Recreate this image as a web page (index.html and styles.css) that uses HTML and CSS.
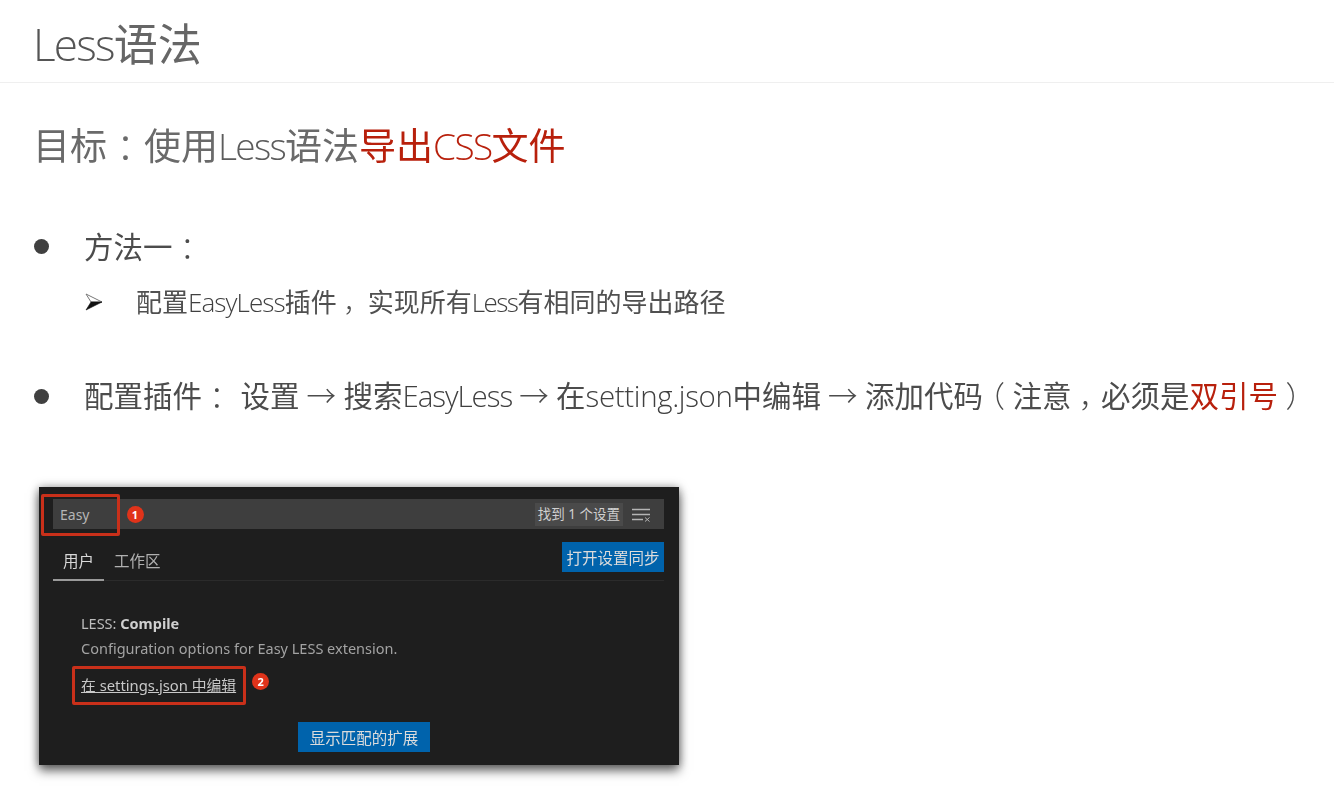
FILE: index.html
```html
<!DOCTYPE html>
<html lang="zh-CN">
<head>
<meta charset="utf-8">
<title>Less语法</title>
<link rel="stylesheet" href="styles.css">
</head>
<body>
<header class="title-bar"><h1 class="title"><span class="latin">Less</span>语法</h1></header>
<main class="content">
  <h2 class="goal">目标<span class="cell">：</span>使用<span class="latin">Less</span>语法<span class="red">导出<span class="latin">CSS</span>文件</span></h2>
  <ul class="points">
    <li class="point first">
      <span class="dot"></span>
      <span>方法一<span class="cell">：</span></span>
    </li>
    <li class="sub">
      <span class="arrow"><svg width="18" height="18" viewBox="0 0 18 18"><path d="M1 1 17 9 6 9Z" fill="#fff" stroke="#777" stroke-width="1"/><path d="M17 9 1 17 6 9Z" fill="#111" stroke="#111" stroke-width=".6"/></svg></span>
      <span>配置<span class="latin">EasyLess</span>插件<span class="cell">，</span><span class="gap-s"></span>实现所有<span class="latin tight">Less</span>有相同的导出路径</span>
    </li>
    <li class="point second">
      <span class="dot"></span>
      <span>配置插件<span class="cell">：</span><span class="gap"></span>设置<span class="thin"> → </span>搜索<span class="latin">EasyLess</span><span class="thin"> → </span>在<span class="latin loose">setting.json</span>中编辑<span class="thin"> → </span>添加代码<span class="cell">（</span>注意<span class="cell">，</span>必须是<span class="red">双引号</span><span class="cell">）</span></span>
    </li>
  </ul>
  <section class="shot">
    <div class="search">
      <span class="query">Easy</span>
      <span class="badge">1</span>
      <span class="count">找到 1 个设置</span>
      <svg class="clear" width="19" height="14" viewBox="0 0 19 14"><path d="M0 1.500H18M0 6.500H18M0 11.500H11" stroke="#b5b5b5" stroke-width="1.300"/><path d="M13 9.500 17.500 13.500M17.500 9.500 13 13.500" stroke="#b5b5b5"/></svg>
    </div>
    <div class="tabs">
      <span class="tab active">用户</span>
      <span class="tab">工作区</span>
      <span class="btn sync">打开设置同步</span>
    </div>
    <div class="setting">
      <p class="name">LESS: <b>Compile</b></p>
      <p class="desc">Configuration options for Easy LESS extension.</p>
      <p class="link-row"><a class="link">在 settings.json 中编辑</a><span class="badge">2</span></p>
    </div>
    <div class="foot"><span class="btn show">显示匹配的扩展</span></div>
    <span class="mark mark-a"></span>
    <span class="mark mark-b"></span>
  </section>
</main>
</body>
</html>
```
FILE: styles.css
```css
* { box-sizing: border-box; }
html, body { margin: 0; height: 100%; }
body {
  background: #fff;
  color: #595959;
  font-family: "Open Sans", "Noto Sans CJK SC", sans-serif;
  overflow: hidden;
  filter: blur(0.4px);
}
.latin { font-family: "Open Sans", "Noto Sans CJK SC", sans-serif; font-weight: 300; letter-spacing: -0.035em; }
.tight { letter-spacing: -0.06em; }
.loose { letter-spacing: -0.012em; }
.title-bar { height: 83px; border-bottom: 1px solid #efefef; padding: 12px 0 0 33px; }
.title { margin: 0; font: 400 44px/60px "Noto Sans CJK SC", sans-serif; color: #666; }
.title .latin { letter-spacing: -0.04em; color: #555; }
.content { padding: 32px 0 0 33px; }
.goal { margin: 0; font: 400 37px/58px "Noto Sans CJK SC", sans-serif; color: #6a6a6a; }
.goal .latin { color: #5c5c5c; letter-spacing: -0.045em; }
.goal .red .latin { color: #b8200c; }
.red { color: #b8200c; }
.cell { display: inline-block; width: 1em; text-align: center; font-weight: 300; font-feature-settings: "halt"; }
.thin { font-family: "Noto Sans CJK SC", sans-serif; font-weight: 300; letter-spacing: .015em; }
.points { list-style: none; margin: 48px 0 0; padding: 0; }
.point, .sub { display: flex; align-items: center; white-space: nowrap; }
.point { font: 400 29.500px/44px "Noto Sans CJK SC", sans-serif; color: #4c4c4c; }
.point .latin, .sub .latin { color: #404040; }
.dot { width: 15px; height: 15px; border-radius: 50%; background: #404040; margin: 3px 35px 0 1px; flex: none; }
.sub { font: 400 26px/40px "Noto Sans CJK SC", sans-serif; color: #505050; margin: 14px 0 0 52px; }
.arrow { display: flex; width: 51px; flex: none; }
.second { margin-top: 50px; }
.gap { display: inline-block; width: 9px; }
.gap-s { display: inline-block; width: 5px; }
.shot {
  position: relative;
  width: 640px;
  height: 278px;
  margin: 69px 0 0 6px;
  background: #1e1e1e;
  box-shadow: 0 6px 10px rgba(0,0,0,.55), 0 0 9px rgba(0,0,0,.35);
  padding: 12px 15px 0 14px;
  font-family: "Noto Sans", "Noto Sans CJK SC", sans-serif;
  color: #c8c8c8;
  font-size: 14px;
}
.search { height: 30px; background: #3e3e3e; display: flex; align-items: center; padding: 0 13px 0 7px; }
.query { font-size: 14px; color: #b5b5b5; width: 66.500px; }
.badge { display: inline-flex; align-items: center; justify-content: center; width: 17px; height: 17px; border-radius: 50%; background: #e0331a; color: #fff; font-size: 11px; font-weight: 700; }
.count { margin-left: auto; background: #4a4a4a; color: #d0d0d0; font-size: 13.500px; line-height: 23px; padding: 0 3px; margin-right: 9px; }
.clear { flex: none; margin-top: 1px; }
.tabs { display: flex; align-items: flex-start; height: 52px; border-bottom: 1px solid #2b2b2b; }
.tab { font-size: 15.500px; line-height: 20px; margin-top: 22px; height: 30px; padding: 0 9px 0 10px; color: #b0b0b0; }
.tab.active { color: #d8d8d8; padding: 0 10px; border-bottom: 2px solid #9a9a9a; }
.btn { display: flex; align-items: center; justify-content: center; background: #0063ac; color: #dcdcdc; font-size: 15.500px; height: 30px; }
.sync { width: 102px; margin: 13px 0 0 auto; }
.setting { padding: 32px 0 0 28px; }
.setting p { margin: 0; font-size: 14.500px; }
.name { line-height: 20px; color: #bdbdbd; }
.name b { color: #d0d0d0; font-weight: 700; }
.desc { line-height: 20px; margin-top: 5px !important; color: #a3a3a3; }
.link-row { display: flex; align-items: center; margin-top: 16px !important; line-height: 22px; }
.link-row .link { color: #c8c8c8; text-decoration: underline; font-size: 14.800px; }
.link-row .badge { margin-left: 16px; margin-top: -7px; }
.foot { display: flex; padding: 26px 0 0 245px; }
.show { width: 132px; }
.mark { position: absolute; border: 3px solid #c9301a; border-radius: 2px; }
.mark-a { left: 2px; top: 7px; width: 79px; height: 42px; }
.mark-b { left: 33px; top: 179px; width: 174px; height: 39px; }
```
